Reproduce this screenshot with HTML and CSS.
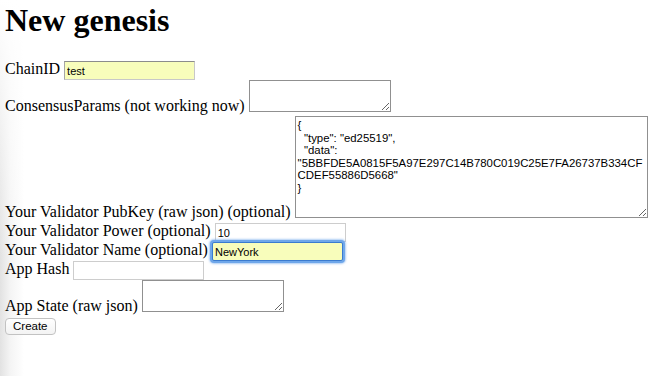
FILE: index.html
```html
<!DOCTYPE html>
<html lang="en">
<head>
  <meta charset="UTF-8">
  <meta name="viewport" content="width=device-width, initial-scale=1.0">
  <title>New genesis</title>
  <link rel="stylesheet" href="styles.css">
</head>
<body>
  <h1>New genesis</h1>

  <form class="genesis">
    <div class="row">
      <label for="chain-id">ChainID</label>
      <input type="text" id="chain-id" class="field autofill" value="test">
    </div>
    <div class="row row-area">
      <label for="consensus">ConsensusParams (not working now)</label>
      <textarea id="consensus" class="area"></textarea>
    </div>
    <div class="row row-area row-big">
      <label for="pubkey">Your Validator PubKey (raw json) (optional)</label>
      <textarea id="pubkey" class="area area-big">{
  "type": "ed25519",
  "data": "5BBFDE5A0815F5A97E297C14B780C019C25E7FA26737B334CFCDEF55886D5668"
}</textarea>
    </div>
    <div class="row">
      <label for="power">Your Validator Power (optional)</label>
      <input type="text" id="power" class="field" value="10">
    </div>
    <div class="row">
      <label for="name">Your Validator Name (optional)</label>
      <input type="text" id="name" class="field autofill focused" value="NewYork">
    </div>
    <div class="row">
      <label for="app-hash">App Hash</label>
      <input type="text" id="app-hash" class="field">
    </div>
    <div class="row row-area">
      <label for="app-state">App State (raw json)</label>
      <textarea id="app-state" class="area"></textarea>
    </div>
    <button type="button" class="btn">Create</button>
  </form>
</body>
</html>
```

FILE: styles.css
```css
html{
  background:
    linear-gradient(to bottom, #fff 0, rgba(255,255,255,0) 260px),
    linear-gradient(to right, #e2e2e2 0, #f4f4f4 10px, #fff 24px);
  min-height: 100%;
}
body{
  margin: 0 0 0 5px;
  font-family: "Liberation Serif", "Times New Roman", serif;
  font-size: 16px;
  color: #000;
}
h1{
  font-size: 32px; line-height: 37px;
  margin: 2px 0 22px;
}

/* form rows */
.row{
  display: flex;
  align-items: flex-start;
  gap: 4px;
}
.row label{line-height: 16px; white-space: nowrap;}
.row-area{align-items: flex-end;}
.row-area label{margin-bottom: 2.4px;}
.row-big .area{margin-bottom: 5px;}
.row-big label{margin-bottom: 3.4px;}

.field{
  box-sizing: border-box;
  width: 131px; height: 19px;
  margin: 0;
  padding: 0 2px;
  border: 1px solid #cdcdcd;
  background: #fff;
  font-family: "Liberation Sans", Arial, sans-serif;
  font-size: 11px;
  color: #000;
  outline: none;
}
.autofill{
  background: #f8fdbb;
  border-color: #c8c8c8;
  border-top-color: #8c8c8c;
  border-left-color: #a6a6a6;
}
.focused{
  border: 1px solid #3a7bcf;
  border-radius: 2px;
  box-shadow: 0 0 0 2px #6fa7ea, 0 0 2px 3px rgba(110,165,235,0.55);
}

.area{
  box-sizing: border-box;
  width: 142px; height: 32px;
  margin: 0 0 4px;
  padding: 2px;
  border: 1px solid #909090;
  border-radius: 0;
  background: #fff;
  font-family: "Liberation Sans", Arial, sans-serif;
  font-size: 11.4px;
  line-height: 12.5px;
  color: #000;
  outline: none;
  overflow: hidden;
}
.area-big{width: 353px; height: 102px;}

.btn{
  margin-top: 1px;
  height: 17px;
  padding: 0 7px;
  border: 1px solid #c2c2c2;
  border-radius: 4px;
  background: linear-gradient(#fff, #f3f3f3);
  font-family: "Liberation Sans", Arial, sans-serif;
  font-size: 11.5px;
  line-height: 15px;
  color: #000;
}
```
